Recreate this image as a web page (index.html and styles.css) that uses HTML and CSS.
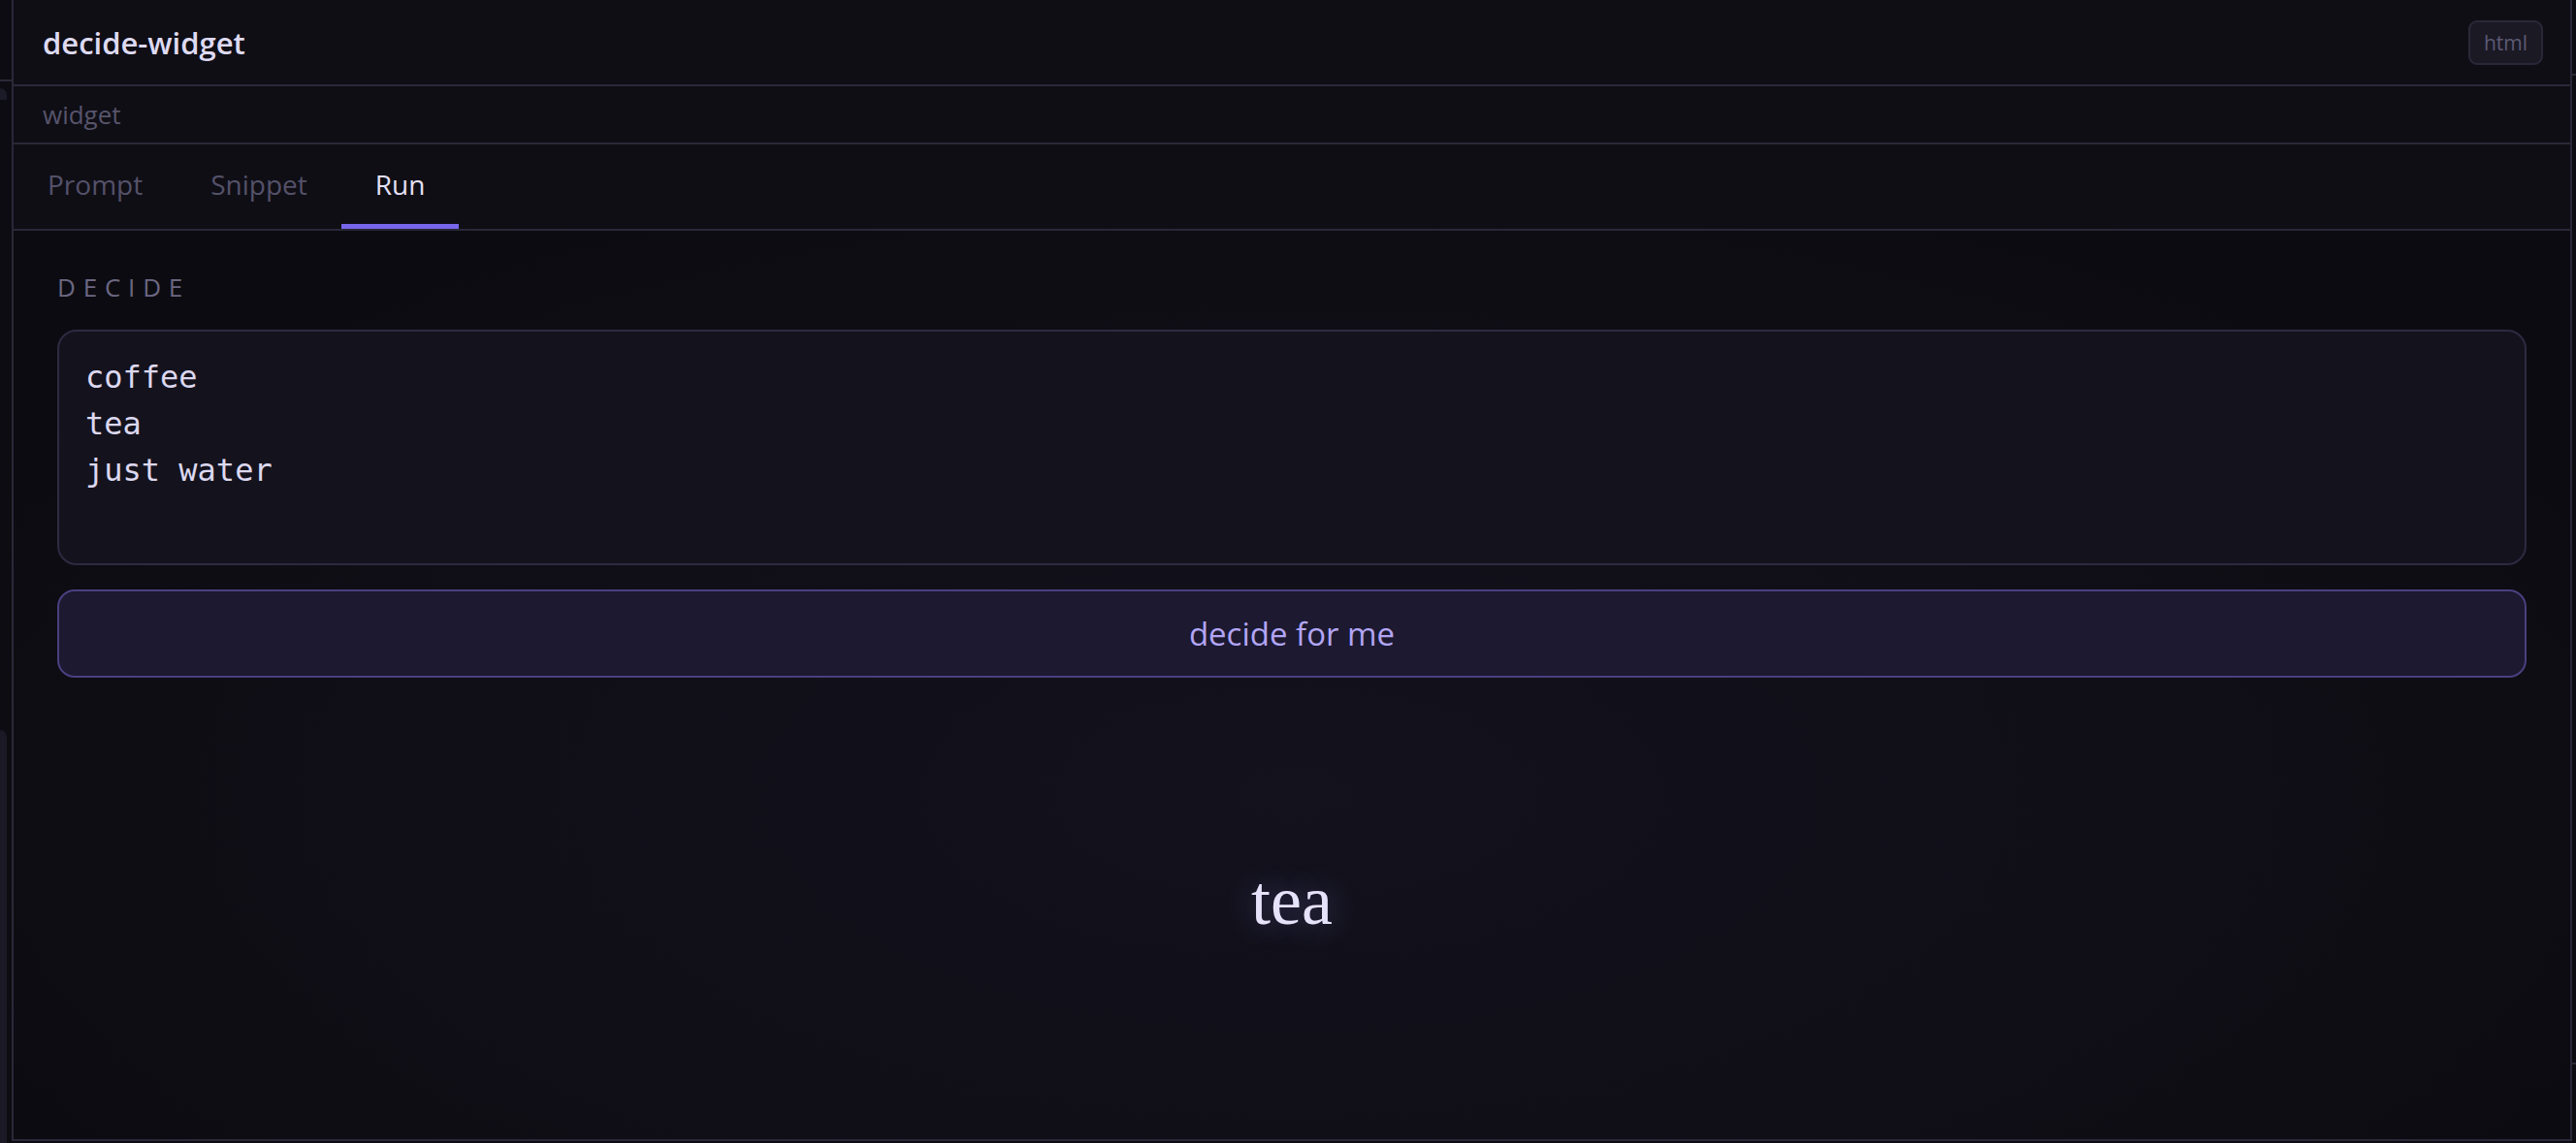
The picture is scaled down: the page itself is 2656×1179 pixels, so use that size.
FILE: index.html
```html
<!DOCTYPE html>
<html>
<head>
  <meta charset="UTF-8">
  <title>decide-widget</title>
  <link rel="stylesheet" href="styles.css">
</head>
<body>
  <div class="rail rail-left">
    <div class="rail-top"></div>
    <div class="rail-caret"></div>
    <div class="rail-chip"></div>
  </div>

  <main class="panel">
    <header class="panel-head">
      <h1 class="panel-title">decide-widget</h1>
      <span class="badge">html</span>
    </header>
    <div class="panel-kind">widget</div>

    <nav class="tabs">
      <button class="tab">Prompt</button>
      <button class="tab">Snippet</button>
      <button class="tab tab-active">Run</button>
    </nav>

    <section class="run">
      <label class="run-label" for="choices">Decide</label>
      <textarea id="choices" class="choices" spellcheck="false">coffee
tea
just water</textarea>
      <button class="decide-btn">decide for me</button>
      <div class="result">
        <span class="result-text">tea</span>
      </div>
    </section>
  </main>

  <div class="rail rail-right">
    <div class="rail-mark rail-mark-top"></div>
    <div class="rail-mark rail-mark-bottom"></div>
  </div>
</body>
</html>
```

FILE: styles.css
```css
body {
  font-family: 'Segoe UI', 'Open Sans', 'Noto Sans', sans-serif;
  margin: 0;
  padding: 0;
  display: flex;
  height: 100vh;
  background-color: #0d0c12;
  color: #dedaf2;
  overflow: hidden;
}
.rail {
  flex: none;
  display: flex;
  flex-direction: column;
}
.rail-left {
  width: 12px;
}
.rail-top {
  height: 82px;
  border-bottom: 2px solid #2a2838;
}
.rail-caret {
  width: 7px;
  height: 12px;
  margin-top: 7px;
  background: #1b1a27;
  border-radius: 0 10px 0 0;
}
.rail-chip {
  width: 7px;
  margin-top: auto;
  height: 426px;
  background: #1a1925;
  border-radius: 0 10px 0 0;
}
.rail-right {
  width: 4px;
}
.rail-mark {
  height: 2px;
  background: #2a2838;
}
.rail-mark-top {
  margin-top: 76px;
}
.rail-mark-bottom {
  margin-top: auto;
  margin-bottom: 81px;
}
.panel {
  flex: 1;
  height: 1177px;
  box-sizing: border-box;
  display: flex;
  flex-direction: column;
  border-left: 2px solid #2a2838;
  border-right: 2px solid #2a2838;
  border-bottom: 2px solid #2a2838;
  background-color: #0f0e15;
}
.panel-head {
  height: 87px;
  flex: none;
  display: flex;
  align-items: center;
  justify-content: space-between;
  padding: 0 28px 0 30px;
  border-bottom: 2px solid #2a2838;
}
.panel-title {
  margin: 0;
  font-size: 31px;
  font-weight: 600;
  color: #dedaf2;
}
.badge {
  height: 46px;
  box-sizing: border-box;
  padding: 0 14px;
  display: flex;
  align-items: center;
  font-size: 21px;
  color: #5c5974;
  background-color: #1a1924;
  border: 2px solid #2a2838;
  border-radius: 9px;
}
.panel-kind {
  height: 58px;
  flex: none;
  display: flex;
  align-items: center;
  padding-left: 30px;
  font-size: 26px;
  color: #57546b;
  border-bottom: 2px solid #2a2838;
}
.tabs {
  height: 87px;
  flex: none;
  display: flex;
  border-bottom: 2px solid #2a2838;
}
.tab {
  padding: 0 35px;
  font-family: inherit;
  font-size: 28px;
  color: #545169;
  background: none;
  border: none;
  border-bottom: 5px solid transparent;
  cursor: pointer;
}
.tab-active {
  color: #e4e0f5;
  border-bottom-color: #7866ea;
}
.run {
  flex: 1;
  display: flex;
  flex-direction: column;
  padding: 40px 45px 0;
  background: radial-gradient(ellipse 60% 75% at 50% 62%, #13121d 0%, #100f17 55%, #0c0b11 100%);
}
.run-label {
  font-size: 26px;
  letter-spacing: 0.3em;
  text-transform: uppercase;
  color: #6b6782;
}
.choices {
  display: block;
  margin-top: 26px;
  height: 243px;
  box-sizing: border-box;
  padding: 23px 27px;
  font-family: 'DejaVu Sans Mono', 'Liberation Mono', monospace;
  font-size: 32px;
  line-height: 48px;
  color: #dcd8f0;
  background-color: #14131d;
  border: 2px solid #2d2a42;
  border-radius: 20px;
  resize: none;
  outline: none;
}
.decide-btn {
  margin-top: 25px;
  height: 91px;
  font-family: inherit;
  font-size: 33px;
  color: #b2a5f4;
  background-color: #1c1930;
  border: 2px solid #4a4080;
  border-radius: 18px;
  cursor: pointer;
}
.result {
  flex: 1;
  display: flex;
  align-items: center;
  justify-content: center;
  padding-bottom: 16px;
}
.result-text {
  font-family: 'Liberation Serif', 'DejaVu Serif', serif;
  font-size: 72px;
  color: #e6e2fa;
  text-shadow: 0 0 30px rgba(150, 140, 240, 0.4);
}
```
